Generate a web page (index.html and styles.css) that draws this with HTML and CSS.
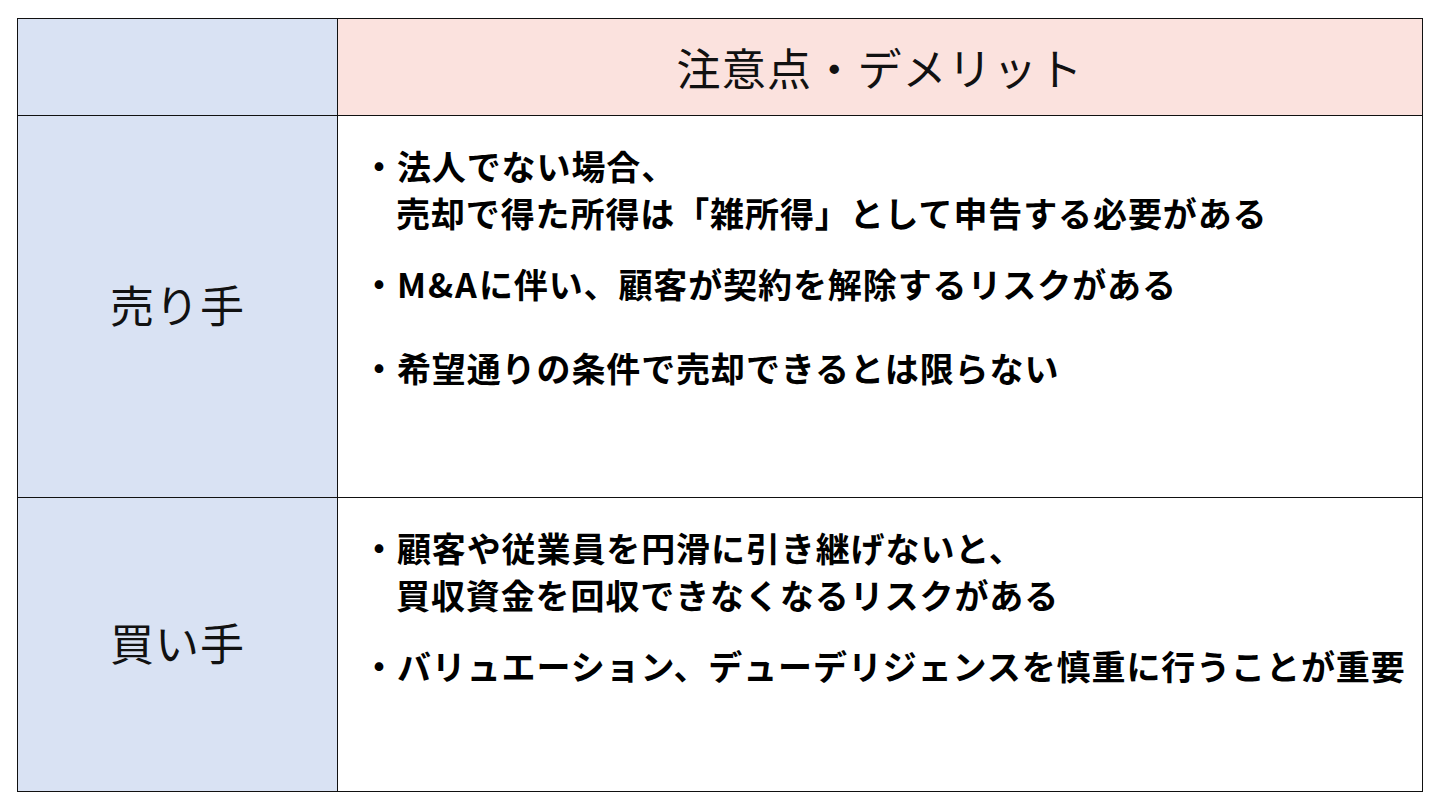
FILE: index.html
```html
<!DOCTYPE html>
<html lang="ja">
<head>
<meta charset="utf-8">
<title>注意点・デメリット</title>
<link rel="stylesheet" href="styles.css">
</head>
<body>
<div class="table">
  <div class="cell corner"></div>
  <div class="cell head">注意点・デメリット</div>

  <div class="cell label">売り手</div>
  <div class="cell body">
    <p class="item">・法人でない場合、<br>売却で得た所得は「雑所得」として申告する必要がある</p>
    <p class="item gap">・<span class="latin">M&amp;A</span>に伴い、顧客が契約を解除するリスクがある</p>
    <p class="item gap-l">・希望通りの条件で売却できるとは限らない</p>
  </div>

  <div class="cell label">買い手</div>
  <div class="cell body">
    <p class="item">・顧客や従業員を円滑に引き継げないと、<br>買収資金を回収できなくなるリスクがある</p>
    <p class="item gap">・バリュエーション、デューデリジェンスを慎重に行うことが重要</p>
  </div>
</div>
</body>
</html>
```
FILE: styles.css
```css
html, body {
  margin: 0;
  padding: 0;
  background: #ffffff;
}

body {
  font-family: "Noto Sans CJK JP", "Noto Sans", sans-serif;
  color: #000;
}

.table {
  margin: 18px 0 0 17px;
  width: 1406px;
  box-sizing: border-box;
  display: grid;
  grid-template-columns: 319px 1084px;
  grid-template-rows: 96px 381px 293px;
  gap: 1px;
  padding: 1px;
  background: #111;
}

.cell {
  box-sizing: border-box;
}

.corner,
.label {
  background: #d9e2f3;
}

.head {
  background: #fbe2de;
  display: flex;
  align-items: center;
  justify-content: center;
  font-size: 44px;
  font-weight: 400;
  letter-spacing: 1.2px;
  color: #111;
}

.label {
  display: flex;
  align-items: center;
  justify-content: center;
  font-size: 44px;
  font-weight: 400;
  letter-spacing: 1px;
  padding-bottom: 6px;
  color: #111;
}

.body {
  background: #fff;
  padding: 26px 0 0 24px;
}

.item {
  margin: 0;
  font-size: 34px;
  font-weight: 700;
  line-height: 47px;
  letter-spacing: 0.9px;
  padding-left: 1em;
  text-indent: -1em;
  white-space: nowrap;
}

.latin {
  letter-spacing: 2px;
}

.item.gap {
  margin-top: 24px;
}

.item.gap-l {
  margin-top: 37px;
}
```
